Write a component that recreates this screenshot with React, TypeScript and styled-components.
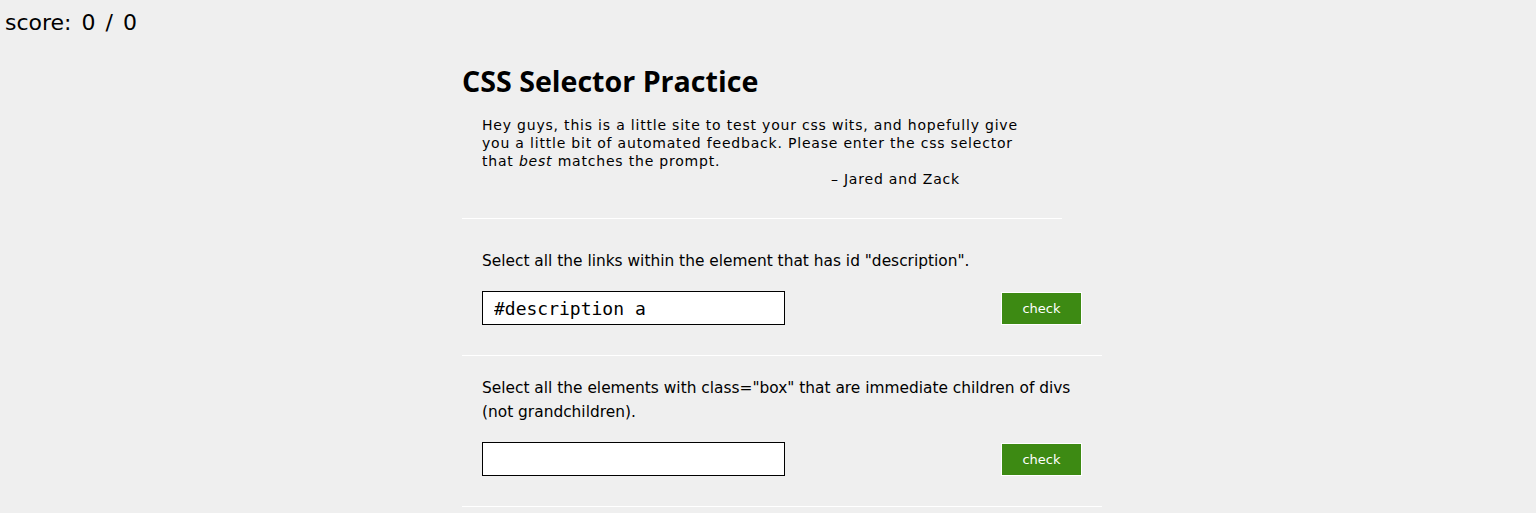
import React from "react";
import styled, { createGlobalStyle } from "styled-components";

const GlobalStyle = createGlobalStyle`
  html, body {
    margin: 0;
    padding: 0;
    background: #efefef;
    font-family: "DejaVu Sans", "Liberation Sans", sans-serif;
    color: #000;
  }
`;

const Score = styled.div`
  padding: 8px 0 0 5px;
  font-size: 22px;
  line-height: 30px;
  word-spacing: 3px;
`;

const Page = styled.div`
  width: 612px;
  margin: 0 auto;
  padding-top: 23px;
`;

const Title = styled.h1`
  margin: 0;
  font-family: "Open Sans", "DejaVu Sans", sans-serif;
  font-size: 28.6px;
  font-weight: bold;
  line-height: 40px;
`;

const Intro = styled.div`
  width: 600px;
  margin-bottom: 10px;
  padding: 15px 0 30px;
  border-bottom: 1px solid #fff;
`;

const Description = styled.p`
  margin: 0 0 0 20px;
  width: 540px;
  font-size: 14px;
  line-height: 18px;
  letter-spacing: 0.8px;
`;

const Signature = styled.p`
  margin: 0;
  padding-right: 102px;
  text-align: right;
  font-size: 14px;
  line-height: 18px;
  letter-spacing: 0.8px;
`;

const Question = styled.section`
  width: 640px;
  padding: 20px 0 30px;
  border-bottom: 1px solid #fff;
`;

const Prompt = styled.p`
  margin: 0 20px;
  font-size: 15.4px;
  line-height: 24px;
`;

const AnswerRow = styled.div`
  display: flex;
  justify-content: space-between;
  align-items: center;
  margin: 18px 20px 0;
`;

const Answer = styled.input`
  box-sizing: border-box;
  width: 303px;
  height: 34px;
  padding: 0 11px;
  border: 1px solid #000;
  background: #fff;
  font-family: "DejaVu Sans Mono", "Liberation Mono", monospace;
  font-size: 18px;
  outline: none;
`;

const CheckButton = styled.button`
  box-sizing: border-box;
  width: 81px;
  height: 33px;
  border: 1px solid #fff;
  background: #3d8a13;
  color: #fff;
  font-family: "DejaVu Sans", sans-serif;
  font-size: 13px;
  cursor: pointer;
`;

const questions = [
  {
    id: 1,
    prompt: 'Select all the links within the element that has id "description".',
    value: "#description a",
  },
  {
    id: 2,
    prompt:
      'Select all the elements with class="box" that are immediate children of divs (not grandchildren).',
    value: "",
  },
];

const App: React.FC = () => {
  return (
    <>
      <GlobalStyle />
      <Score>score: 0 / 0</Score>
      <Page>
        <Title>CSS Selector Practice</Title>
        <Intro>
          <Description>
            Hey guys, this is a little site to test your css wits, and hopefully give
            you a little bit of automated feedback. Please enter the css selector that{" "}
            <em>best</em> matches the prompt.
          </Description>
          <Signature>– Jared and Zack</Signature>
        </Intro>
        {questions.map((q) => (
          <Question key={q.id}>
            <Prompt>{q.prompt}</Prompt>
            <AnswerRow>
              <Answer type="text" defaultValue={q.value} />
              <CheckButton type="button">check</CheckButton>
            </AnswerRow>
          </Question>
        ))}
      </Page>
    </>
  );
};

export default App;
